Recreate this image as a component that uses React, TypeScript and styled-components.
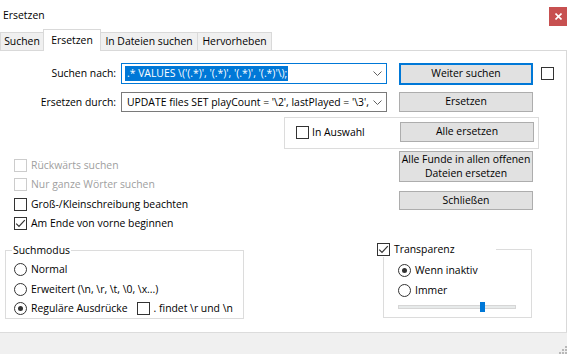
import React from 'react';
import styled, { createGlobalStyle } from 'styled-components';

const FONT = `"Open Sans", "Noto Sans", "Liberation Sans", sans-serif`;

const Global = createGlobalStyle`
  html, body { margin: 0; padding: 0; background: #ffffff; }
  body { font-family: ${FONT}; font-size: 10.4px; color: #000000; }
  * { box-sizing: border-box; }
`;

const Window = styled.div`
  width: 567px;
  height: 354px;
  display: flex;
  flex-direction: column;
  background: #ffffff;
  overflow: hidden;
`;

const TitleBar = styled.div`
  height: 29px;
  display: flex;
  justify-content: space-between;
  align-items: flex-start;
  flex-shrink: 0;
`;

const Title = styled.div`
  padding: 8px 0 0 3px;
  line-height: 15px;
`;

const CloseBtn = styled.div`
  margin-top: 7px;
  width: 18px;
  height: 19px;
  background: #c75050;
  display: flex;
  align-items: center;
  justify-content: center;
`;

const TabStrip = styled.div`
  height: 21px;
  display: flex;
  align-items: flex-end;
  flex-shrink: 0;
  position: relative;
  z-index: 1;
`;

const Tab = styled.div<{ $w: number; $active?: boolean }>`
  width: ${(p) => p.$w}px;
  height: ${(p) => (p.$active ? 22 : 18)}px;
  margin-right: -1px;
  margin-bottom: ${(p) => (p.$active ? -1 : 0)}px;
  border: 1px solid #d9d9d9;
  border-bottom: none;
  background: ${(p) => (p.$active ? '#ffffff' : '#f0f0f0')};
  display: flex;
  align-items: center;
  justify-content: center;
  padding-bottom: ${(p) => (p.$active ? 1 : 0)}px;
  line-height: 15px;
  white-space: nowrap;
  position: relative;
  z-index: ${(p) => (p.$active ? 2 : 1)};
`;

const Panel = styled.div`
  flex: 1;
  border-top: 1px solid #d9d9d9;
  border-right: 1px solid #d9d9d9;
  display: flex;
  flex-direction: column;
  padding-top: 12px;
`;

const FormRow = styled.div<{ $h: number; $mt?: number }>`
  display: flex;
  align-items: center;
  height: ${(p) => p.$h}px;
  margin-top: ${(p) => p.$mt ?? 0}px;
`;

const FieldLabel = styled.div`
  width: 116px;
  margin-right: 5px;
  text-align: right;
  white-space: nowrap;
  line-height: 15px;
`;

const Combo = styled.div<{ $focused?: boolean }>`
  width: 266px;
  height: 100%;
  border: 1px solid ${(p) => (p.$focused ? '#0078d7' : '#7a7a7a')};
  background: #ffffff;
  display: flex;
  align-items: center;
  padding-left: 3px;
`;

const ComboText = styled.div`
  flex: 1;
  overflow: hidden;
  white-space: nowrap;
  line-height: 15px;
  padding-left: 2px;
`;

const Selection = styled.span`
  background: #0078d7;
  color: #ffffff;
  padding: 1px 1px 1px 2px;
  margin-left: -2px;
`;

const ChevronBox = styled.div`
  width: 17px;
  flex-shrink: 0;
  display: flex;
  align-items: center;
  justify-content: center;
`;

const Button = styled.div<{ $h: number; $default?: boolean; $ml?: number; $mt?: number }>`
  width: 134px;
  height: ${(p) => p.$h}px;
  margin-left: ${(p) => p.$ml ?? 0}px;
  margin-top: ${(p) => p.$mt ?? 0}px;
  flex-shrink: 0;
  background: #e1e1e1;
  border: ${(p) => (p.$default ? '2px solid #0078d7' : '1px solid #adadad')};
  display: flex;
  align-items: center;
  justify-content: center;
  text-align: center;
  line-height: 13.5px;
  white-space: nowrap;
`;

const CheckBoxBox = styled.div<{ $disabled?: boolean; $ml?: number }>`
  width: 13px;
  height: 13px;
  margin-left: ${(p) => p.$ml ?? 0}px;
  flex-shrink: 0;
  border: 1px solid ${(p) => (p.$disabled ? '#cccccc' : '#333333')};
  background: #ffffff;
  display: flex;
  align-items: center;
  justify-content: center;
`;

const RadioBox = styled.div`
  width: 13px;
  height: 13px;
  flex-shrink: 0;
  border: 1px solid #333333;
  border-radius: 50%;
  background: #ffffff;
  display: flex;
  align-items: center;
  justify-content: center;
`;

const RadioDot = styled.div`
  width: 5px;
  height: 5px;
  border-radius: 50%;
  background: #333333;
`;

const OptionRow = styled.div<{ $h: number; $disabled?: boolean; $gap?: number }>`
  display: flex;
  align-items: center;
  height: ${(p) => p.$h}px;
  gap: ${(p) => p.$gap ?? 4}px;
  color: ${(p) => (p.$disabled ? '#a0a0a0' : '#000000')};
  white-space: nowrap;
  line-height: 15px;
`;

const SelectionGroup = styled.div`
  margin-left: 284px;
  width: 255px;
  height: 32px;
  border: 1px solid #dcdcdc;
  display: flex;
  align-items: flex-start;
  justify-content: space-between;
  padding: 4px 4px 0 11px;
`;

const Lower = styled.div`
  display: flex;
`;

const LeftCol = styled.div`
  width: 383px;
  display: flex;
  flex-direction: column;
`;

const RightCol = styled.div`
  flex: 1;
  display: flex;
  flex-direction: column;
`;

const CheckList = styled.div`
  padding: 6.5px 0 0 14px;
  display: flex;
  flex-direction: column;
`;

const Group = styled.fieldset<{ $ml: number; $w: number; $mt: number; $pl: number }>`
  margin: ${(p) => p.$mt}px 0 0 ${(p) => p.$ml}px;
  width: ${(p) => p.$w}px;
  border: 1px solid #dcdcdc;
  padding: 0 0 0 ${(p) => p.$pl}px;
  min-width: 0;
`;

const GroupTitle = styled.legend<{ $ml: number; $w?: number }>`
  margin-left: ${(p) => p.$ml}px;
  padding: 0 1px;
  line-height: 15px;
  height: 15px;
  width: ${(p) => (p.$w ? `${p.$w}px` : 'auto')};
  display: flex;
  align-items: center;
  gap: 4px;
  white-space: nowrap;
`;

const SliderRow = styled.div`
  height: 17px;
  padding-top: 2px;
`;

const SliderTrack = styled.div`
  position: relative;
  width: 118px;
  height: 4px;
  margin-top: 3px;
  background: #e7eaea;
  border: 1px solid #d6d6d6;
`;

const SliderThumb = styled.div`
  position: absolute;
  top: -4px;
  width: 5px;
  height: 10px;
  background: #0078d7;
`;

const Footer = styled.div`
  height: 22px;
  flex-shrink: 0;
  background: #f0f0f0;
  border-top: 1px solid #dcdcdc;
  display: flex;
  justify-content: flex-end;
  align-items: flex-end;
`;

const Chevron = () => (
  <svg width="9" height="5" viewBox="0 0 9 5">
    <path d="M0.5 0.5 L4.5 4.5 L8.5 0.5" fill="none" stroke="#606060" strokeWidth="1" />
  </svg>
);

const CheckBox: React.FC<{ checked?: boolean; disabled?: boolean; ml?: number }> = ({ checked, disabled, ml }) => (
  <CheckBoxBox $disabled={disabled} $ml={ml}>
    {checked && (
      <svg width="11" height="11" viewBox="0 0 11 11">
        <path d="M1.2 5.6 L4 8.4 L9.8 2.2" fill="none" stroke="#333333" strokeWidth="1.2" />
      </svg>
    )}
  </CheckBoxBox>
);

const Radio: React.FC<{ checked?: boolean }> = ({ checked }) => <RadioBox>{checked && <RadioDot />}</RadioBox>;

const Grip = () => (
  <svg width="10" height="10" viewBox="0 0 10 10">
    {[
      [8, 2],
      [5, 5],
      [8, 5],
      [2, 8],
      [5, 8],
      [8, 8],
    ].map(([x, y], i) => (
      <rect key={i} x={x} y={y} width="2" height="2" fill="#b8b8b8" />
    ))}
  </svg>
);

export default function App() {
  return (
    <>
      <Global />
      <Window>
        <TitleBar>
          <Title>Ersetzen</Title>
          <CloseBtn>
            <svg width="7" height="7" viewBox="0 0 7 7">
              <path d="M0.5 0.5 L6.5 6.5 M6.5 0.5 L0.5 6.5" stroke="#ffffff" strokeWidth="1.6" />
            </svg>
          </CloseBtn>
        </TitleBar>
        <TabStrip>
          <Tab $w={44}>Suchen</Tab>
          <Tab $w={58} $active>
            Ersetzen
          </Tab>
          <Tab $w={98}>In Dateien suchen</Tab>
          <Tab $w={75}>Hervorheben</Tab>
        </TabStrip>
        <Panel>
          <FormRow $h={21}>
            <FieldLabel>Suchen nach:</FieldLabel>
            <Combo $focused>
              <ComboText>
                <Selection>{".* VALUES \\('(.*)', '(.*)', '(.*)', '(.*)'\\);"}</Selection>
              </ComboText>
              <ChevronBox>
                <Chevron />
              </ChevronBox>
            </Combo>
            <Button $h={22} $default $ml={12}>
              Weiter suchen
            </Button>
            <CheckBox ml={8} />
          </FormRow>
          <FormRow $h={20} $mt={8}>
            <FieldLabel>Ersetzen durch:</FieldLabel>
            <Combo>
              <ComboText>{"UPDATE files SET playCount = '\\2', lastPlayed = '\\3', rating = '\\4'"}</ComboText>
              <ChevronBox>
                <Chevron />
              </ChevronBox>
            </Combo>
            <Button $h={20} $ml={12}>
              Ersetzen
            </Button>
          </FormRow>
          <FormRow $h={32} $mt={5}>
            <SelectionGroup>
              <OptionRow $h={20} $gap={3}>
                <CheckBox />
                In Auswahl
              </OptionRow>
              <Button $h={20}>Alle ersetzen</Button>
            </SelectionGroup>
          </FormRow>
          <Lower>
            <LeftCol>
              <CheckList>
                <OptionRow $h={19.5} $disabled>
                  <CheckBox disabled />
                  Rückwärts suchen
                </OptionRow>
                <OptionRow $h={19.5} $disabled>
                  <CheckBox disabled />
                  Nur ganze Wörter suchen
                </OptionRow>
                <OptionRow $h={19.5}>
                  <CheckBox />
                  Groß-/Kleinschreibung beachten
                </OptionRow>
                <OptionRow $h={19.5}>
                  <CheckBox checked />
                  Am Ende von vorne beginnen
                </OptionRow>
              </CheckList>
              <Group $ml={5} $w={239} $mt={9} $pl={8}>
                <GroupTitle $ml={-2}>Suchmodus</GroupTitle>
                <OptionRow $h={20} style={{ marginTop: 1.5 }}>
                  <Radio />
                  Normal
                </OptionRow>
                <OptionRow $h={20}>
                  <Radio />
                  {"Erweitert (\\n, \\r, \\t, \\0, \\x...)"}
                </OptionRow>
                <OptionRow $h={19}>
                  <Radio checked />
                  Reguläre Ausdrücke
                  <CheckBox ml={5} />
                  {". findet \\r und \\n"}
                </OptionRow>
              </Group>
            </LeftCol>
            <RightCol>
              <Button $h={31} $ml={16} $mt={2}>
                Alle Funde in allen offenen
                <br />
                Dateien ersetzen
              </Button>
              <Button $h={19} $ml={16} $mt={9}>
                Schließen
              </Button>
              <Group $ml={0} $w={149} $mt={31.5} $pl={14}>
                <GroupTitle $ml={-22} $w={120}>
                  <CheckBox checked />
                  Transparenz
                </GroupTitle>
                <OptionRow $h={20} style={{ marginTop: 3.5 }}>
                  <Radio checked />
                  Wenn inaktiv
                </OptionRow>
                <OptionRow $h={20}>
                  <Radio />
                  Immer
                </OptionRow>
                <SliderRow>
                  <SliderTrack>
                    <SliderThumb style={{ left: 81 }} />
                  </SliderTrack>
                </SliderRow>
              </Group>
            </RightCol>
          </Lower>
        </Panel>
        <Footer>
          <Grip />
        </Footer>
      </Window>
    </>
  );
}
